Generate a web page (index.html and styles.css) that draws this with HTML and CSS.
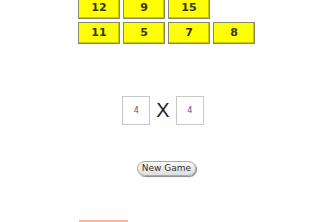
FILE: index.html
```html
<!DOCTYPE html>
<html lang="en">
<head>
  <meta charset="UTF-8">
  <title>Multiplication Game</title>
  <link rel="stylesheet" href="styles.css">
</head>
<body>

  <!-- Answer board -->
  <div class="board">
    <div class="row">
      <div class="tile">12</div>
      <div class="tile">9</div>
      <div class="tile">15</div>
    </div>
    <div class="row">
      <div class="tile">11</div>
      <div class="tile">5</div>
      <div class="tile">7</div>
      <div class="tile">8</div>
    </div>
  </div>

  <!-- Question -->
  <div class="question">
    <input class="factor" type="text" value="4">
    <span class="times">X</span>
    <input class="factor" type="text" value="4">
  </div>

  <div class="controls">
    <button class="new-game">New Game</button>
  </div>

  <div class="message"></div>

</body>
</html>
```

FILE: styles.css
```css
body {
  margin: 0;
  font-family: 'DejaVu Sans', Verdana, sans-serif;
  background: #fff;
  overflow: hidden;
}

.board {
  width: 177px;
  margin: -3px auto 0;
  display: flex;
  flex-direction: column;
  gap: 3px;
}

.row {
  display: flex;
  gap: 3px;
}

.tile {
  width: 40px;
  height: 20px;
  background: #ffff00;
  border: 1px solid #8a8a6a;
  box-shadow: inset -1px -1px 0 #c8c800;
  color: #333;
  font-size: 11px;
  font-weight: bold;
  line-height: 20px;
  text-align: center;
}

.question {
  display: flex;
  justify-content: center;
  align-items: center;
  gap: 6px;
  margin: 52px 7px 0 0;
}

.factor {
  width: 28px;
  height: 29px;
  box-sizing: border-box;
  padding: 0;
  border: 1px solid #c8c8c8;
  font-family: 'DejaVu Sans', sans-serif;
  font-size: 8px;
  color: #555577;
  text-align: center;
  outline: none;
}

.times {
  font-family: 'Liberation Sans', Arial, sans-serif;
  font-size: 20px;
  color: #222;
}

.controls {
  text-align: center;
  margin-top: 31px;
}

.new-game {
  font-family: 'DejaVu Sans', sans-serif;
  font-size: 9px;
  color: #333;
  padding: 1px 4px;
  height: 15px;
  border: 1px solid #aaa;
  border-radius: 8px;
  background: linear-gradient(#fafafa, #dedede);
  box-shadow: 1px 1px 1px #888;
}

.message {
  width: 49px;
  height: 4px;
  margin: 44px 0 0 79px;
  background: #ffb494;
}
```
